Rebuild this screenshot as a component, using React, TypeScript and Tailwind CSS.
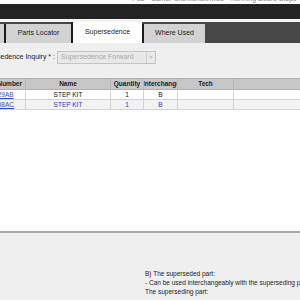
import React from 'react';

// Supersedence tab of a parts catalogue (scrolled view, cut off at the left edge)

const columns = [
  { key: 'part', label: 'Part Number', width: 'w-[46px]', align: 'justify-center' },
  { key: 'name', label: 'Name', width: 'w-[85px]', align: 'justify-center' },
  { key: 'qty', label: 'Quantity', width: 'w-[33px]', align: 'justify-center' },
  { key: 'inter', label: 'Interchangeability', width: 'w-[34px]', align: 'justify-start pl-[0px]' },
  { key: 'tech', label: 'Tech', width: 'w-[56px]', align: 'justify-center' },
  { key: 'extra', label: '', width: 'w-[86px]', align: 'justify-center' },
];

const rows = [
  { part: 'MH729AB', name: 'STEP KIT', qty: '1', inter: 'B', selected: false },
  { part: 'MH698AC', name: 'STEP KIT', qty: '1', inter: 'B', selected: true },
];

function Tab({ label, active, width }: { label: string; active?: boolean; width: string }) {
  return (
    <div
      className={`${width} flex items-center justify-center border-l-2 border-[#1c1c1c] text-[7px] text-[#1a1a1a] whitespace-nowrap ${
        active ? 'h-[21px] bg-white' : 'h-[19px] bg-[#d2d2d2]'
      }`}
    >
      {label}
    </div>
  );
}

export default function App() {
  return (
    <div className="w-[300px] h-[300px] overflow-hidden flex flex-col bg-[#efefef] font-['Liberation_Sans',Arial,sans-serif]">
      {/* titre coupé en haut */}
      <div className="h-[4px] bg-white overflow-hidden">
        <div className="-mt-[5px] pl-[132px] text-[7px] leading-[8px] text-[#8a8a8a] whitespace-nowrap">
          P13 - Canter Crankshaft/Misc - Running Board Steps
        </div>
      </div>
      <div className="h-[15px] bg-[#232323]" />
      <div className="h-[3px] bg-[#f4f4f4]" />

      {/* onglets */}
      <div className="h-[21px] bg-[#474747] flex items-end">
        <div className="w-[4px] h-[19px] bg-[#d2d2d2]" />
        <Tab label="Parts Locator" width="w-[67px]" />
        <Tab label="Supersedence" width="w-[71px]" active />
        <Tab label="Where Used" width="w-[63px]" />
      </div>

      {/* formulaire */}
      <div className="pt-[8px] flex items-center gap-[2px]">
        <div className="w-[55px] text-right text-[7px] text-[#222] whitespace-nowrap overflow-hidden flex justify-end">
          Supersedence Inquiry * :
        </div>
        <div className="w-[99px] h-[13px] flex items-center border border-[#c4c4c4] bg-[#e9e9e9]">
          <span className="flex-1 pl-[3px] text-[7px] text-[#a8a8a8] whitespace-nowrap">Supersedence Forward</span>
          <span className="w-[9px] h-full flex items-center justify-center border-l border-[#d0d0d0] text-[5px] text-[#c0c0c0]">▼</span>
        </div>
      </div>

      {/* grille */}
      <div className="mt-[14px] h-[155px] bg-white border-b-2 border-[#a9a9a9] overflow-hidden">
        <div className="-ml-[20px] flex flex-col">
          <div className="h-[12px] flex bg-[#c7c7c7] border-t border-[#9a9a9a] border-b border-[#b0b0b0]">
            {columns.map((c) => (
              <div
                key={c.key}
                className={`${c.width} ${c.align} shrink-0 flex items-center overflow-hidden whitespace-nowrap border-r border-[#b8b8b8] text-[6.5px] font-bold text-[#222]`}
              >
                <span className={c.key === 'inter' ? '-ml-[1px]' : ''}>{c.label}</span>
              </div>
            ))}
          </div>
          {rows.map((r) => (
            <div
              key={r.part}
              className={`h-[10px] flex border-b border-[#d2d2d2] text-[6.5px] ${
                r.selected ? 'bg-[#f2f2f4] text-[#3535b5]' : 'bg-white text-[#111]'
              }`}
            >
              <div className="w-[46px] shrink-0 flex items-center pl-[4px] border-r border-[#d2d2d2]">
                <span className="underline text-[#2f4fc0]">{r.part}</span>
              </div>
              <div className="w-[85px] shrink-0 flex items-center justify-center border-r border-[#d2d2d2]">{r.name}</div>
              <div className="w-[33px] shrink-0 flex items-center justify-center border-r border-[#d2d2d2]">{r.qty}</div>
              <div className="w-[34px] shrink-0 flex items-center justify-center border-r border-[#d2d2d2]">{r.inter}</div>
              <div className="w-[56px] shrink-0 border-r border-[#d2d2d2]" />
              <div className="w-[86px] shrink-0" />
            </div>
          ))}
        </div>
      </div>

      {/* légende */}
      <div className="flex-1 pt-[36px] pl-[145px] text-[6.5px] leading-[9px] text-[#222] whitespace-nowrap">
        <div>B) The superseded part:</div>
        <div>- Can be used interchangeably with the superseding part.</div>
        <div>The superseding part:</div>
      </div>
    </div>
  );
}
